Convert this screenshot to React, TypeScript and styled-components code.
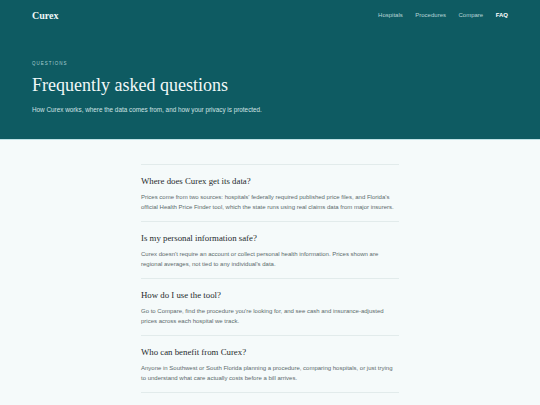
import styled, { createGlobalStyle } from 'styled-components';

const GlobalStyle = createGlobalStyle`
  * {
    box-sizing: border-box;
  }
  body {
    margin: 0;
    background: #f5fafa;
    font-family: 'Liberation Sans', Arial, sans-serif;
  }
`;

const FAQ_ITEMS = [
  {
    question: 'Where does Curex get its data?',
    answer:
      "Prices come from two sources: hospitals' federally required published price files, and Florida's official Health Price Finder tool, which the state runs using real claims data from major insurers.",
  },
  {
    question: 'Is my personal information safe?',
    answer:
      "Curex doesn't require an account or collect personal health information. Prices shown are regional averages, not tied to any individual's data.",
  },
  {
    question: 'How do I use the tool?',
    answer:
      "Go to Compare, find the procedure you're looking for, and see cash and insurance-adjusted prices across each hospital we track.",
  },
  {
    question: 'Who can benefit from Curex?',
    answer:
      'Anyone in Southwest or South Florida planning a procedure, comparing hospitals, or just trying to understand what care actually costs before a bill arrives.',
  },
  {
    question: 'Is Curex affiliated with any hospital?',
    answer:
      'No. Curex is independent and does not receive payment from any hospital or insurer listed on the site.',
  },
];

const Hero = styled.header`
  background: #0e5b62;
  border-bottom: 1px solid #bfe3e6;
  padding: 0 32px;
  height: 140px;
`;

const Nav = styled.nav`
  display: flex;
  align-items: center;
  justify-content: space-between;
  height: 30px;
`;

const Logo = styled.div`
  font-family: 'Liberation Serif', 'Times New Roman', serif;
  font-weight: 700;
  font-size: 10px;
  color: #eef7f7;
`;

const NavLinks = styled.div`
  display: flex;
  gap: 12.5px;
`;

const NavLink = styled.a<{ active?: boolean }>`
  font-size: 6px;
  color: ${(props) => (props.active ? '#ffffff' : '#b8d5d7')};
  font-weight: ${(props) => (props.active ? 700 : 400)};
  text-decoration: none;
`;

const HeroBody = styled.div`
  padding-top: 31px;
`;

const Eyebrow = styled.div`
  font-size: 4.5px;
  letter-spacing: 0.22em;
  color: #a6cdd0;
  text-transform: uppercase;
`;

const Title = styled.h1`
  font-family: 'Liberation Serif', 'Times New Roman', serif;
  font-weight: 400;
  font-size: 18px;
  color: #f2f8f8;
  margin: 9px 0 0;
`;

const Subtitle = styled.p`
  font-size: 6.35px;
  color: #cfe2e3;
  margin: 10px 0 0;
`;

const List = styled.main`
  max-width: 258px;
  margin: 24px auto 0;
`;

const Item = styled.section`
  border-top: 1px solid #e2ebeb;
  padding: 10px 0 9px;
`;

const Question = styled.h2`
  font-family: 'Liberation Serif', 'Times New Roman', serif;
  font-weight: 400;
  font-size: 8.8px;
  line-height: 12px;
  color: #1f2b2d;
  margin: 0;
`;

const Answer = styled.p`
  font-size: 6px;
  line-height: 10px;
  color: #5c6a6c;
  margin: 5px 0 0;
`;

function App() {
  return (
    <>
      <GlobalStyle />
      <Hero>
        <Nav>
          <Logo>Curex</Logo>
          <NavLinks>
            <NavLink href="#">Hospitals</NavLink>
            <NavLink href="#">Procedures</NavLink>
            <NavLink href="#">Compare</NavLink>
            <NavLink href="#" active>
              FAQ
            </NavLink>
          </NavLinks>
        </Nav>
        <HeroBody>
          <Eyebrow>Questions</Eyebrow>
          <Title>Frequently asked questions</Title>
          <Subtitle>
            How Curex works, where the data comes from, and how your privacy is
            protected.
          </Subtitle>
        </HeroBody>
      </Hero>
      <List>
        {FAQ_ITEMS.map((item) => (
          <Item key={item.question}>
            <Question>{item.question}</Question>
            <Answer>{item.answer}</Answer>
          </Item>
        ))}
      </List>
    </>
  );
}

export default App;
